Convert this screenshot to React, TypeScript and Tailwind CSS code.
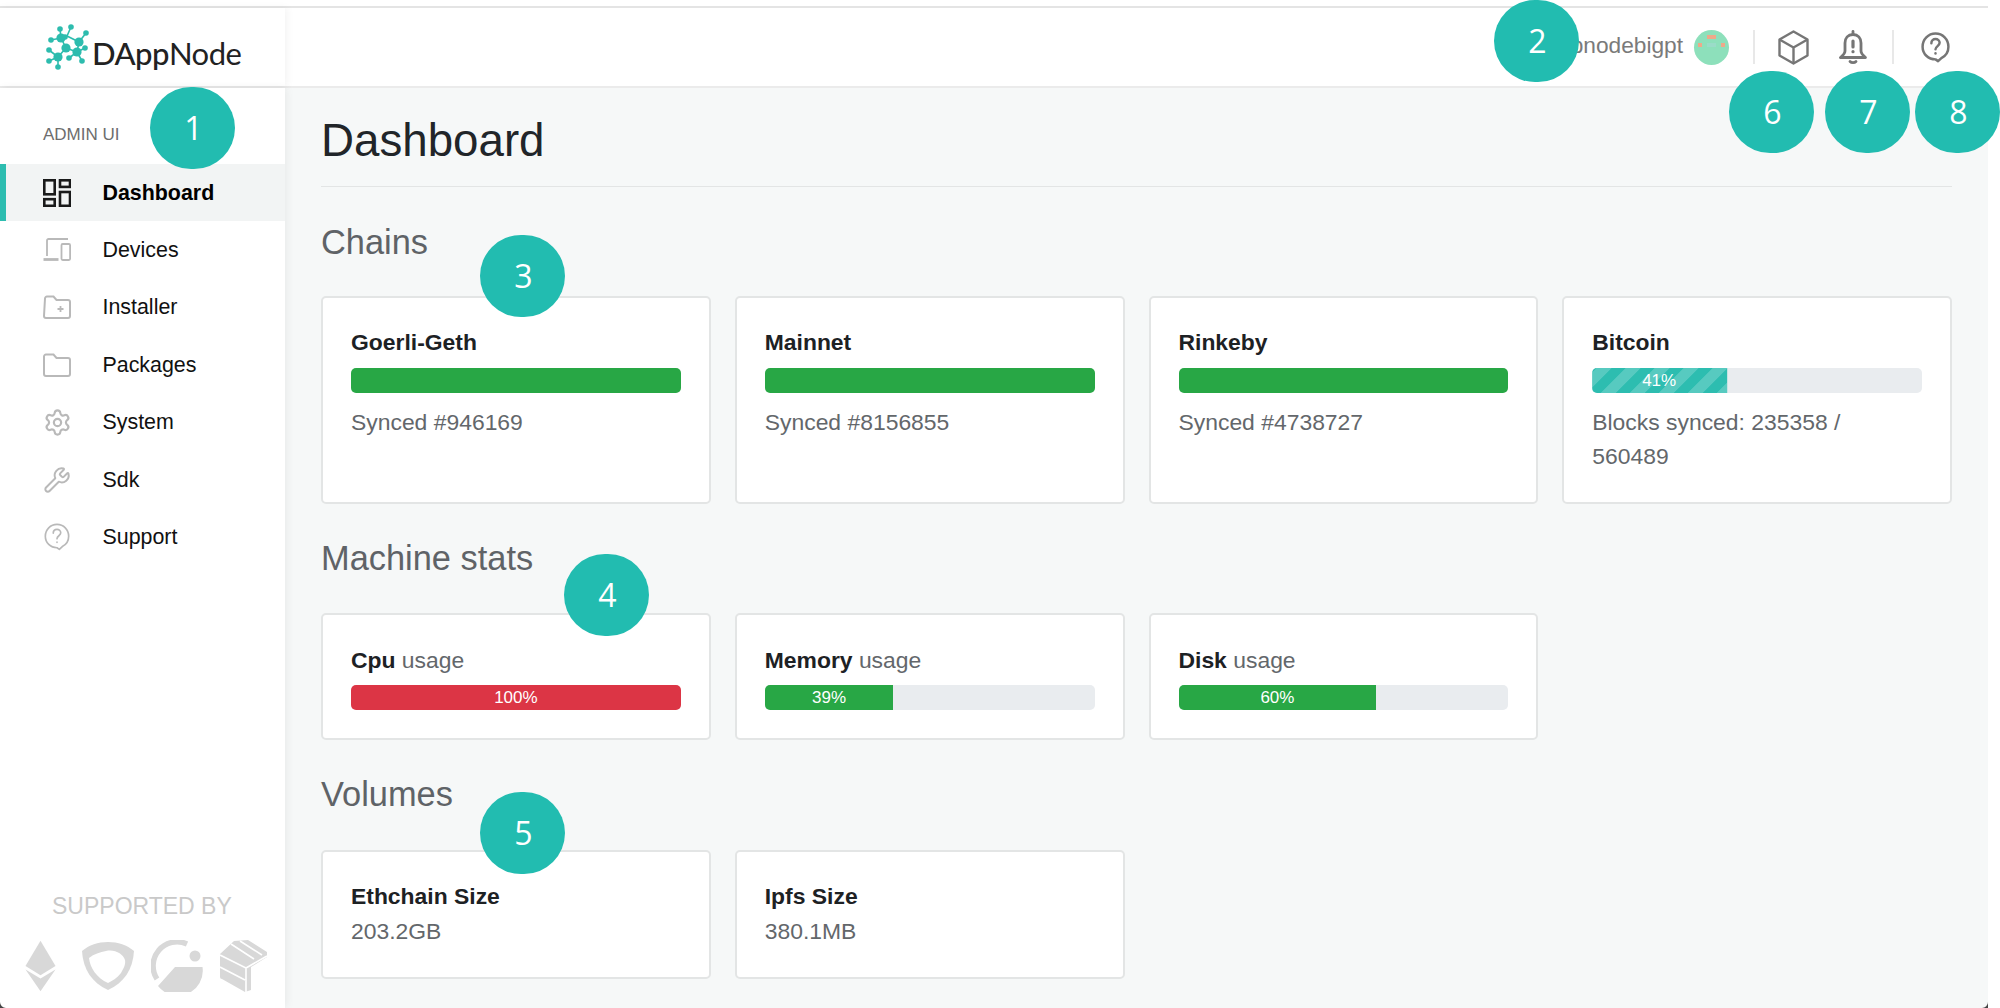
import React from "react";
import { Settings, Wrench } from "lucide-react";

const font = "font-['Liberation_Sans',Arial,sans-serif]";

const DashboardIcon = () => (
  <svg width="28" height="28" viewBox="0 0 28 28" fill="none" stroke="#1a1a1a" strokeWidth="2.6">
    <rect x="1.3" y="1.3" width="10.4" height="14" />
    <rect x="17" y="1.3" width="10" height="6.6" />
    <rect x="1.3" y="20.2" width="10.4" height="6.6" />
    <rect x="17" y="13" width="10" height="13.8" />
  </svg>
);

const DevicesIcon = () => (
  <svg width="28" height="28" viewBox="0 0 28 28" fill="none" stroke="#b9b9b9" strokeWidth="1.8">
    <path d="M25 3H5.5a1.5 1.5 0 0 0-1.5 1.5V20" />
    <path d="M0.5 23.5h15" strokeWidth="2.8" />
    <rect x="18.5" y="8" width="8.6" height="16" rx="1.2" />
  </svg>
);

const FolderPlusIcon = () => (
  <svg width="28" height="28" viewBox="0 0 28 28" fill="none" stroke="#b9b9b9" strokeWidth="2">
    <path d="M2 5.5A2 2 0 0 1 4 3.5h6.5l3 3.5H25a2 2 0 0 1 2 2v14a2 2 0 0 1-2 2H3a2 2 0 0 1-2-2z" />
    <path d="M17.5 13v6M14.5 16h6" strokeWidth="1.8" />
  </svg>
);

const FolderIcon = () => (
  <svg width="28" height="28" viewBox="0 0 28 28" fill="none" stroke="#b9b9b9" strokeWidth="2">
    <path d="M1 5.5a2 2 0 0 1 2-2h7.5l3 3.5H25a2 2 0 0 1 2 2v14a2 2 0 0 1-2 2H3a2 2 0 0 1-2-2z" />
  </svg>
);

const HelpBubble = ({ size, color, width }: { size: number; color: string; width: number }) => (
  <svg width={size} height={size} viewBox="0 0 28 30" fill="none" stroke={color} strokeWidth={width} strokeLinecap="round" strokeLinejoin="round">
    <path d="M14 26.5c-7 0-12.5-5.3-12.5-12.3S7 1.5 14 1.5s12.5 5.6 12.5 12.7c0 5-2.8 9-6.8 11l-3.2 3z" />
    <path d="M10 10.8c0-2.4 1.8-4 4-4s4 1.6 4 3.7c0 3-4 3.300-4 6.300" />
    <path d="M14 20.500v.2" />
  </svg>
);

const CubeIcon = () => (
  <svg width="31" height="35" viewBox="0 0 31 35" fill="none" stroke="#767676" strokeWidth="2.4" strokeLinejoin="round">
    <path d="M15.500 1.500 29.500 9.500v16l-14 8-14-8v-16z" />
    <path d="M1.500 9.500l14 8 14-8M15.500 17.500v16" />
  </svg>
);

const BellIcon = () => (
  <svg width="28" height="35" viewBox="0 0 28 35" fill="none" stroke="#767676" strokeWidth="2.800" strokeLinecap="round" strokeLinejoin="round">
    <path d="M14 4.500c-5 0-8 3.500-8 8.500v8c0 2-1.500 4-4.500 6.500h25c-3-2.500-4.500-4.500-4.500-6.500v-8c0-5-3-8.500-8-8.500z" />
    <path d="M14 1.500v3" />
    <path d="M14 11v6M14 21.500v.2" strokeWidth="3.200" />
    <path d="M11 31.500c1.500 1.500 4.500 1.500 6 0" />
  </svg>
);

// pixel identicon next to the user name
const Avatar = () => (
  <div className="relative mr-[24px] ml-[11px] h-[35px] w-[35px] overflow-hidden rounded-full bg-[#8de0bb]">
    <div className="absolute top-[5px] left-[13px] h-[4px] w-[9px] bg-[#eea98a]" />
    <div className="absolute top-[13px] left-[4px] h-[4px] w-[4px] bg-[#eea98a]" />
    <div className="absolute top-[13px] left-[27px] h-[4px] w-[4px] bg-[#eea98a]" />
    <div className="absolute top-[13px] left-[13px] h-[4px] w-[9px] bg-[#9adcc8]" />
  </div>
);

// teal molecule mark of the logo
const LogoMark = () => {
  const small: [number, number][] = [
    [14, 5], [25, 3], [40, 9], [5, 16], [3, 26], [3, 37], [12, 43], [23, 34], [36, 37], [39, 24], [19, 13],
  ];
  const big: [number, number][] = [[15, 14], [20, 24], [12, 33], [31, 28], [33, 18]];
  const edges: [number, number, number, number][] = [
    [14, 5, 15, 14], [25, 3, 21, 12], [21, 12, 15, 14], [21, 12, 33, 18], [40, 9, 33, 18], [5, 16, 15, 14],
    [15, 14, 20, 24], [20, 24, 12, 33], [20, 24, 31, 28], [33, 18, 31, 28], [3, 26, 12, 33], [3, 37, 12, 33],
    [12, 43, 12, 33], [23, 34, 31, 28], [36, 37, 31, 28], [39, 24, 31, 28],
  ];
  return (
    <svg width="43" height="46" viewBox="0 0 43 46">
      {edges.map(([a, b, c, d], i) => (
        <line key={i} x1={a} y1={b} x2={c} y2={d} stroke="#2dbcae" strokeWidth="1.6" />
      ))}
      {small.map(([x, y], i) => (
        <circle key={i} cx={x} cy={y} r="2.800" fill="#2dbcae" />
      ))}
      {big.map(([x, y], i) => (
        <circle key={i} cx={x} cy={y} r="4.600" fill="#2dbcae" />
      ))}
    </svg>
  );
};

const SupportLogos = () => (
  <div className="mt-[19px] ml-[25px] flex items-end gap-[17px]">
    <svg width="31" height="52" viewBox="0 0 32 52" fill="#d8d8d8" className="mr-[9px]">
      <path d="M16 0 31.500 26 16 35.500 0.500 26z" />
      <path d="M16 39 31.500 29.500 16 52 0.500 29.500z" />
    </svg>
    <svg width="52" height="48" viewBox="0 0 52 48" fill="none" className="mb-[2px]">
      <path d="M26 0c10 0 19 3 26 9-1 18-10 32-26 39C10 41 1 27 0 9 7 3 16 0 26 0z" fill="#d8d8d8" />
      <path d="M24 9c9-2 17 3 19 9 1 5-2 9-4 13-4 5-9 8-13 10C15 36 8 26 7 16c5-4 11-6 17-7z" fill="#fff" />
    </svg>
    <svg width="52" height="52" viewBox="0 0 52 52" fill="none">
      <path d="M36 4A24 24 0 0 0 6 39" stroke="#d8d8d8" strokeWidth="5.500" />
      <circle cx="44" cy="16" r="5.500" fill="#d8d8d8" />
      <path d="M7 46 24 27H51.500A25 25 0 0 1 7 46z" fill="#d8d8d8" />
    </svg>
    <svg width="48" height="52" viewBox="0 0 48 52">
      <path d="M14 1 28 0 47 12v5L31 27v23l-6 2L2 39a2 2 0 0 1-2-2V14z" fill="#d8d8d8" />
      <path d="M11 4 34 19M20 1 42 15M0 15l26 13v24M0 27l25 13M26 28l21-12" stroke="#fff" strokeWidth="1.600" fill="none" />
    </svg>
  </div>
);

const navItems = [
  { name: "Dashboard", icon: <DashboardIcon />, active: true },
  { name: "Devices", icon: <DevicesIcon /> },
  { name: "Installer", icon: <FolderPlusIcon /> },
  { name: "Packages", icon: <FolderIcon /> },
  { name: "System", icon: <Settings size={29} color="#b9b9b9" strokeWidth={1.8} /> },
  { name: "Sdk", icon: <Wrench size={28} color="#b9b9b9" strokeWidth={1.7} /> },
  { name: "Support", icon: <HelpBubble size={28} color="#b9b9b9" width={1.8} /> },
];

const Card = ({ children }: { children: React.ReactNode }) => (
  <div className="rounded-[5px] border-2 border-[#e3e5e5] bg-white px-[28px] pt-[27px] pb-[28px] text-[22.9px] leading-[34px] text-[#63676b]">
    {children}
  </div>
);

const Bar = ({ value, color, stripes, hideLabel }: { value: number; color: string; stripes?: boolean; hideLabel?: boolean }) => (
  <div className="mt-[9px] flex h-[25px] overflow-hidden rounded-[5px] bg-[#e9ecef] text-[17px] leading-[25px] text-white">
    <div
      className={`text-center ${color} ${
        stripes
          ? "-scale-x-100 bg-[linear-gradient(45deg,rgba(255,255,255,0.2)_25%,transparent_25%,transparent_50%,rgba(255,255,255,0.2)_50%,rgba(255,255,255,0.2)_75%,transparent_75%)] bg-size-[29px_29px]"
          : ""
      }`}
      style={{ width: `${value}%` }}
    >
      {!hideLabel && <span className={stripes ? "inline-block -scale-x-100" : ""}>{value}%</span>}
    </div>
  </div>
);

const Title = ({ children }: { children: React.ReactNode }) => (
  <div className="font-bold text-[#1d2124]">{children}</div>
);

const SectionTitle = ({ children, className }: { children: React.ReactNode; className: string }) => (
  <h2 className={`text-[34.4px] leading-[41px] text-[#5f6367] ${className}`}>{children}</h2>
);

const Badge = ({ n, className }: { n: number; className: string }) => (
  <div
    className={`absolute z-20 flex h-[82px] w-[85px] items-center justify-center rounded-full bg-[#22bcb0] pl-[2px] font-['Open_Sans',sans-serif] text-[32px] text-white ${className}`}
  >
    {n}
  </div>
);

const App = () => {
  return (
    <div className={`relative h-[1008px] w-[2000px] overflow-hidden bg-white pt-[6px] ${font}`}>
      <div className="h-[1002px] w-[1988px] border-t-2 border-[#e4e4e4]">
        <header className="flex h-[80px] border-b-2 border-[#ebebeb]">
          <div className="relative z-10 flex w-[285px] items-center pl-[46px] shadow-[2px_0_8px_rgba(0,0,0,0.05)]">
            <LogoMark />
            <span className="mt-[12px] ml-[3px] font-['Lato',sans-serif] text-[31px] tracking-[-0.5px] text-[#222]">
              <span className="font-medium">DApp</span>Node
            </span>
          </div>
          <div className="flex flex-1 items-center justify-end">
            <span className="mb-[3px] text-[22.7px] text-[#7a7a7a]">dappnodebigpt</span>
            <Avatar />
            <div className="h-[34px] w-[2px] bg-[#e8e8e8]" />
            <div className="ml-[23px]">
              <CubeIcon />
            </div>
            <div className="ml-[30px]">
              <BellIcon />
            </div>
            <div className="ml-[25px] h-[34px] w-[2px] bg-[#e8e8e8]" />
            <div className="mr-[37px] ml-[26px]">
              <HelpBubble size={31} color="#767676" width={2.4} />
            </div>
          </div>
        </header>
        <div className="flex h-[920px]">
          <aside className="relative z-10 flex w-[285px] flex-col justify-between bg-white pb-[16px] shadow-[2px_0_8px_rgba(0,0,0,0.06)]">
            <div>
              <div className="mt-[34px] mb-[16px] pl-[43px] text-[17px] leading-[26px] text-[#6d6d6d]">ADMIN UI</div>
              {navItems.map((item) => (
                <div
                  key={item.name}
                  className={`flex h-[57.4px] items-center border-l-[6px] pl-[37px] text-[21.4px] ${
                    item.active ? "border-[#2dbdb0] bg-[#f2f4f4] font-bold text-black" : "border-transparent text-[#111]"
                  }`}
                >
                  <div className="flex w-[59.5px]">{item.icon}</div>
                  {item.name}
                </div>
              ))}
            </div>
            <div>
              <div className="ml-[52px] text-[23px] leading-[30px] text-[#c9c9c9]">SUPPORTED BY</div>
              <SupportLogos />
            </div>
          </aside>
          <main className="flex-1 bg-[#f6f8f8] px-[36px] pt-[26px]">
            <h1 className="text-[45.7px] leading-[54px] text-[#212529]">Dashboard</h1>
            <div className="mt-[18px] h-[1px] bg-[#e3e5e5]" />
            <SectionTitle className="mt-[35px] mb-[33px]">Chains</SectionTitle>
            <div className="grid grid-cols-4 gap-[24px]">
              <Card>
                <Title>Goerli-Geth</Title>
                <Bar value={100} color="bg-[#28a745]" hideLabel />
                <div className="mt-[12px] mb-[1px]">Synced #946169</div>
              </Card>
              <Card>
                <Title>Mainnet</Title>
                <Bar value={100} color="bg-[#28a745]" hideLabel />
                <div className="mt-[12px] mb-[1px]">Synced #8156855</div>
              </Card>
              <Card>
                <Title>Rinkeby</Title>
                <Bar value={100} color="bg-[#28a745]" hideLabel />
                <div className="mt-[12px] mb-[1px]">Synced #4738727</div>
              </Card>
              <Card>
                <Title>Bitcoin</Title>
                <Bar value={41} color="bg-[#2dbdb0]" stripes />
                <div className="mt-[12px] mb-[1px]">
                  Blocks synced: 235358 /<br />
                  560489
                </div>
              </Card>
            </div>
            <SectionTitle className="mt-[34px] mb-[34px]">Machine stats</SectionTitle>
            <div className="grid grid-cols-4 gap-[24px]">
              <Card>
                <div className="mt-[1px] -mb-[1px]"><b className="text-[#1d2124]">Cpu</b> usage</div>
                <Bar value={100} color="bg-[#dc3545]" />
              </Card>
              <Card>
                <div className="mt-[1px] -mb-[1px]"><b className="text-[#1d2124]">Memory</b> usage</div>
                <Bar value={39} color="bg-[#28a745]" />
              </Card>
              <Card>
                <div className="mt-[1px] -mb-[1px]"><b className="text-[#1d2124]">Disk</b> usage</div>
                <Bar value={60} color="bg-[#28a745]" />
              </Card>
            </div>
            <SectionTitle className="mt-[34px] mb-[35px]">Volumes</SectionTitle>
            <div className="grid grid-cols-4 gap-[24px]">
              <Card>
                <Title>Ethchain Size</Title>
                <div className="my-[1px]">203.2GB</div>
              </Card>
              <Card>
                <Title>Ipfs Size</Title>
                <div className="my-[1px]">380.1MB</div>
              </Card>
            </div>
          </main>
        </div>
      </div>
      <Badge n={1} className="top-[87px] left-[150px]" />
      <Badge n={2} className="top-0 left-[1494px]" />
      <Badge n={3} className="top-[235px] left-[480px]" />
      <Badge n={4} className="top-[554px] left-[564px]" />
      <Badge n={5} className="top-[792px] left-[480px]" />
      <Badge n={6} className="top-[71px] left-[1729px]" />
      <Badge n={7} className="top-[71px] left-[1825px]" />
      <Badge n={8} className="top-[71px] left-[1915px]" />
      {/* window corners of the original capture */}
      <svg width="6" height="6" viewBox="0 0 6 6" className="absolute bottom-0 left-0 z-20">
        <path d="M0 0V6H6A6 6 0 0 1 0 0z" fill="#444" />
      </svg>
      <svg width="6" height="6" viewBox="0 0 6 6" className="absolute right-[12px] bottom-0 z-20">
        <path d="M6 0V6H0A6 6 0 0 0 6 0z" fill="#444" />
      </svg>
    </div>
  );
};

export default App;
